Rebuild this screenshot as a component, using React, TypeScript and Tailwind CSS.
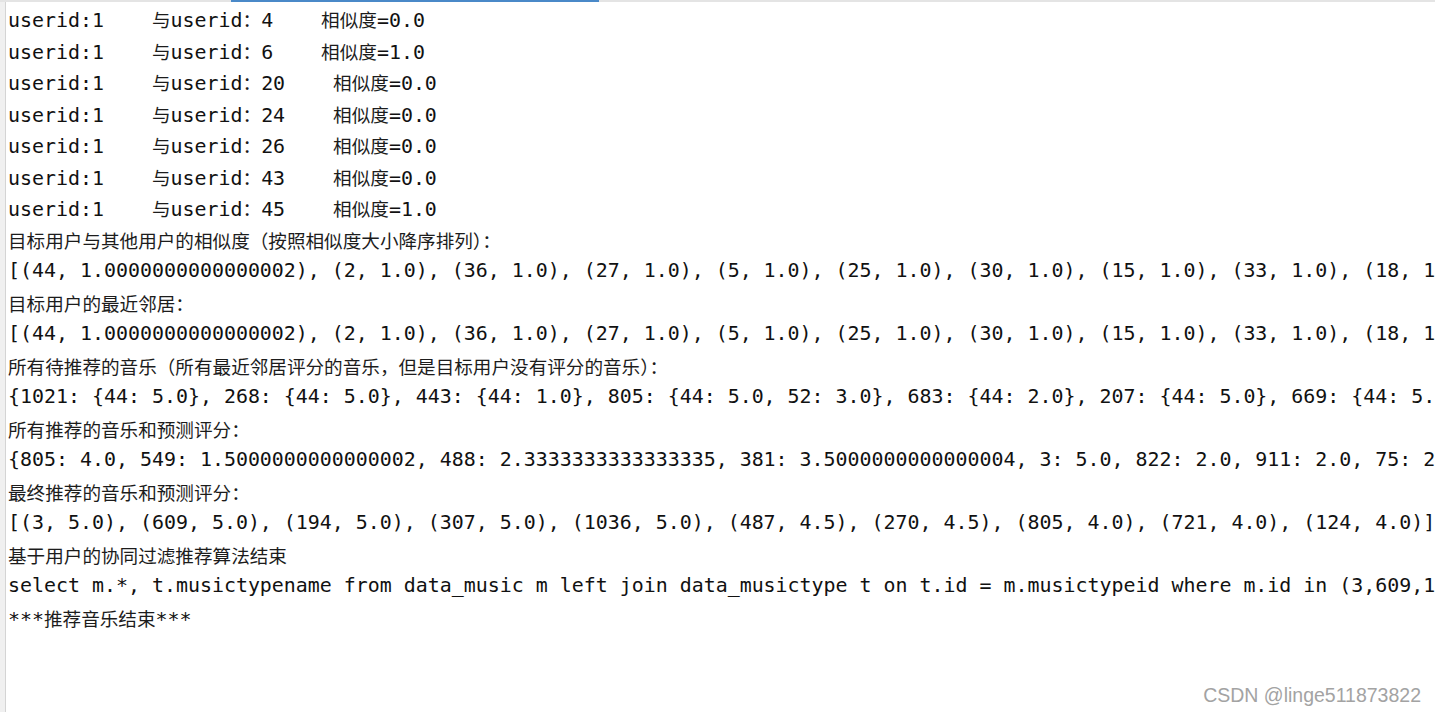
import React from "react";

const lines: string[] = [
  "userid:1    与userid：4    相似度=0.0",
  "userid:1    与userid：6    相似度=1.0",
  "userid:1    与userid：20    相似度=0.0",
  "userid:1    与userid：24    相似度=0.0",
  "userid:1    与userid：26    相似度=0.0",
  "userid:1    与userid：43    相似度=0.0",
  "userid:1    与userid：45    相似度=1.0",
  "目标用户与其他用户的相似度（按照相似度大小降序排列）：",
  "[(44, 1.0000000000000002), (2, 1.0), (36, 1.0), (27, 1.0), (5, 1.0), (25, 1.0), (30, 1.0), (15, 1.0), (33, 1.0), (18, 1.0), (40, 1.0)]",
  "目标用户的最近邻居：",
  "[(44, 1.0000000000000002), (2, 1.0), (36, 1.0), (27, 1.0), (5, 1.0), (25, 1.0), (30, 1.0), (15, 1.0), (33, 1.0), (18, 1.0), (40, 1.0)]",
  "所有待推荐的音乐（所有最近邻居评分的音乐，但是目标用户没有评分的音乐）：",
  "{1021: {44: 5.0}, 268: {44: 5.0}, 443: {44: 1.0}, 805: {44: 5.0, 52: 3.0}, 683: {44: 2.0}, 207: {44: 5.0}, 669: {44: 5.0}, 3: {44: 5.0}}",
  "所有推荐的音乐和预测评分：",
  "{805: 4.0, 549: 1.5000000000000002, 488: 2.3333333333333335, 381: 3.5000000000000004, 3: 5.0, 822: 2.0, 911: 2.0, 75: 2.0, 609: 5.0}",
  "最终推荐的音乐和预测评分：",
  "[(3, 5.0), (609, 5.0), (194, 5.0), (307, 5.0), (1036, 5.0), (487, 4.5), (270, 4.5), (805, 4.0), (721, 4.0), (124, 4.0)]",
  "基于用户的协同过滤推荐算法结束",
  "select m.*, t.musictypename from data_music m left join data_musictype t on t.id = m.musictypeid where m.id in (3,609,194,307,1036)",
  "***推荐音乐结束***",
];

function Line({ text }: { text: string }) {
  const parts = text.split(/([\u3000-\u303f\u4e00-\u9fff\uff00-\uffef]+)/);
  return (
    <div className="h-[31.5px] leading-[31.5px] whitespace-pre overflow-hidden text-[#111111]">
      {parts.map((p, i) =>
        /[\u3000-\u303f\u4e00-\u9fff\uff00-\uffef]/.test(p) ? (
          <span
            key={i}
            className="text-[18.6px] text-[#1c1c1c] [font-family:'Noto_Sans_CJK_SC',sans-serif]"
          >
            {p}
          </span>
        ) : (
          <span key={i}>{p}</span>
        )
      )}
    </div>
  );
}

export default function App() {
  return (
    <div className="relative w-[1435px] h-[712px] bg-white overflow-hidden flex flex-col">
      <div className="h-[2px] bg-[#e4e4e4] shrink-0 flex">
        <div className="ml-[231px] w-[368px] h-[2px] bg-[#4a89c8]" />
      </div>
      <div className="flex flex-1 min-h-0">
        <div className="w-[6px] shrink-0 bg-[#f0f0f0] border-r border-[#d4d4d4]" />
        <div className="flex-1 min-w-0 pl-[2px] pt-[1px] text-[19.93px] [font-family:'DejaVu_Sans_Mono','Noto_Sans_CJK_SC',monospace] overflow-hidden">
          {lines.map((l, i) => (
            <Line key={i} text={l} />
          ))}
        </div>
      </div>
      <div className="absolute right-[14px] bottom-[5px] text-[19.5px] leading-[24px] text-[#a3a3a3] [font-family:'Liberation_Sans',Arial,sans-serif]">
        CSDN @linge511873822
      </div>
    </div>
  );
}
